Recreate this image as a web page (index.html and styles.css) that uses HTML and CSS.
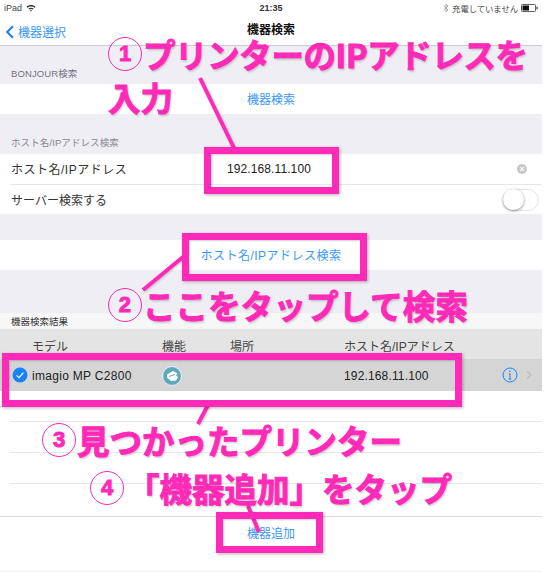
FILE: index.html
```html
<!DOCTYPE html>
<html lang="ja">
<head>
  <meta charset="UTF-8">
  <title>機器検索</title>
  <link rel="stylesheet" href="styles.css">
</head>
<body>
  <div class="screen">
    <div class="status">
      <div class="status-left">
        <span>iPad</span>
        <svg class="wifi" width="10" height="8" viewBox="0 0 10 8"><path d="M0.5 2.8C3 0.4 7 0.4 9.5 2.8L8.6 3.8C6.5 1.9 3.5 1.9 1.4 3.8ZM2.3 4.7C3.8 3.3 6.2 3.3 7.7 4.7L6.8 5.6C5.7 4.7 4.3 4.7 3.2 5.6ZM4 6.6C4.6 6.1 5.4 6.1 6 6.6L5 7.7Z" fill="#333"/></svg>
      </div>
      <div class="status-time">21:35</div>
      <div class="status-right">
        <svg width="6" height="10" viewBox="0 0 6 10"><path d="M0.5 2.8L5 7L3 9V1L5 3L0.5 7.2" fill="none" stroke="#999" stroke-width="0.8"/></svg>
        <span>充電していません</span>
        <svg width="17" height="8" viewBox="0 0 17 8"><rect x="0.5" y="0.5" width="14" height="7" rx="1" fill="#fff" stroke="#333" stroke-width="0.8"/><rect x="1.5" y="1.5" width="6.5" height="5" fill="#111"/><rect x="15.4" y="2.8" width="1.2" height="2.4" fill="#333"/></svg>
      </div>
    </div>

    <div class="nav">
      <div class="nav-back">
        <svg width="10" height="14" viewBox="0 0 10 14"><path d="M8 1.2L2.2 7L8 12.8" fill="none" stroke="#1a82f7" stroke-width="2"/></svg>
        <span>機器選択</span>
      </div>
      <div class="nav-title">機器検索</div>
    </div>

    <div class="section-label first">BONJOUR検索</div>
    <div class="group">
      <div class="row center link">機器検索</div>
    </div>

    <div class="section-label second">ホスト名/IPアドレス検索</div>
    <div class="group">
      <div class="row field">
        <span class="field-name wide">ホスト名/IPアドレス</span>
        <span class="field-value">192.168.11.100</span>
        <span class="clear">
          <svg width="10" height="10" viewBox="0 0 10 10"><circle cx="5" cy="5" r="5" fill="#c7c7cc"/><path d="M3.2 3.2L6.8 6.8M6.8 3.2L3.2 6.8" stroke="#fff" stroke-width="1.1"/></svg>
        </span>
      </div>
      <div class="row field last">
        <span class="field-name">サーバー検索する</span>
        <span class="toggle"><span class="knob"></span></span>
      </div>
    </div>

    <div class="group button-group">
      <div class="row center link wide">ホスト名/IPアドレス検索</div>
    </div>

    <div class="result-label">機器検索結果</div>
    <div class="table-head">
      <span class="col-model">モデル</span>
      <span class="col-func">機能</span>
      <span class="col-place">場所</span>
      <span class="col-host">ホスト名/IPアドレス</span>
    </div>
    <div class="table-row selected">
      <span class="check">
        <svg width="16" height="16" viewBox="0 0 16 16"><circle cx="8" cy="8" r="7.5" fill="#1a82f7"/><path d="M4.6 8.3L7 10.6L11.4 5.6" fill="none" stroke="#fff" stroke-width="1.1"/></svg>
      </span>
      <span class="col-model">imagio MP C2800</span>
      <span class="col-func">
        <svg class="printer" width="20" height="20" viewBox="0 0 20 20"><circle cx="10" cy="10" r="9.5" fill="#62a9b6" stroke="#eef"/><path d="M5 8.5L11 5L15.5 7.5L14 9.5L16 11L14 14.5L9 15L5 11.5Z" fill="#fff"/><path d="M7 10.5L13 8.5" stroke="#62a9b6" stroke-width="1"/></svg>
      </span>
      <span class="col-place"></span>
      <span class="col-host">192.168.11.100</span>
      <span class="row-end">
        <svg width="16" height="16" viewBox="0 0 16 16"><circle cx="8" cy="8" r="7" fill="none" stroke="#1a82f7"/><path d="M8 6.8V12M6.8 12H9.2M6.9 6.8H8" fill="none" stroke="#1a82f7"/><circle cx="8" cy="4.3" r="0.8" fill="#1a82f7"/></svg>
        <svg class="chevron" width="6" height="10" viewBox="0 0 6 10"><path d="M1 1L5 5L1 9" fill="none" stroke="#bbb" stroke-width="1.2"/></svg>
      </span>
    </div>
    <div class="table-row blank"></div>
    <div class="table-row blank"></div>
    <div class="table-row blank"></div>
    <div class="table-row blank tail"></div>
    <div class="toolbar link">機器追加</div>

    <!-- 注釈 -->
    <svg class="lines" width="545" height="572" viewBox="0 0 545 572">
      <path d="M200 78L234 148M183 257L143 290M208 405L198 424M248 506L259 532" stroke="#ff2ab8" stroke-width="4" fill="none"/>
    </svg>
    <div class="mark mark-1"></div>
    <div class="mark mark-2"></div>
    <div class="mark mark-3"></div>
    <div class="mark mark-4"></div>

    <div class="note note-1"><span class="num">1</span>プリンターのIPアドレスを</div>
    <div class="note note-1b">入力</div>
    <div class="note note-2"><span class="num">2</span>ここをタップして検索</div>
    <div class="note note-3"><span class="num">3</span>見つかったプリンター</div>
    <div class="note note-4"><span class="num">4</span>「機器追加」をタップ</div>
  </div>
</body>
</html>
```

FILE: styles.css
```css
* { box-sizing: border-box; }
body {
  margin: 0;
  background: #fff;
  font-family: "Liberation Sans", "Noto Sans CJK JP", sans-serif;
  font-size: 12px;
  color: #222;
}
.screen {
  position: relative;
  width: 542px;
  height: 572px;
  background: #eeeef4;
}

.status {
  display: grid;
  grid-template-columns: 1fr auto 1fr;
  align-items: center;
  height: 16px;
  padding: 0 4px;
  background: #fff;
  font-size: 8.3px;
  color: #444;
}
.status-left { display: flex; align-items: center; gap: 4px; font-size: 9px; }
.status-time { font-size: 9px; font-weight: bold; color: #333; }
.status-right { display: flex; justify-content: flex-end; align-items: center; gap: 3px; }

.nav {
  display: flex;
  align-items: center;
  justify-content: center;
  position: relative;
  height: 30px;
  padding-bottom: 1px;
  background: #fff;
  border-bottom: 1px solid #ccc;
}
.nav-back {
  position: absolute;
  left: 5px;
  top: 7px;
  display: flex;
  align-items: center;
  gap: 3px;
  color: #3b97f5;
}
.nav-title { font-weight: bold; line-height: 12px; color: #111; }

.section-label {
  display: flex;
  align-items: flex-end;
  padding: 0 0 4px 11px;
  font-size: 9.5px;
  letter-spacing: 0.1px;
  color: #77727f;
}
.section-label.first { height: 38px; }
.section-label.second { height: 40px; padding-bottom: 5px; color: #8b8790; }

.group { background: #fff; }
.button-group { margin-top: 26px; }
.row { height: 30px; }
.center { display: flex; align-items: center; justify-content: center; padding-bottom: 2px; }
.link { color: #3b97f5; }
.wide { letter-spacing: 0.5px; }

.field {
  display: flex;
  align-items: center;
  height: 31px;
  margin-left: 11px;
  padding-bottom: 1px;
  border-bottom: 1px solid #e6e6e6;
}
.field.last { height: 29px; padding-bottom: 0; border-bottom: 0; }
.field-name { width: 216px; color: #333; }
.field-value { flex: 1; letter-spacing: 0.1px; }
.clear { display: flex; margin-right: 15px; }
.field.last .field-name { flex: 1; }

.toggle {
  display: block;
  width: 36px;
  height: 22px;
  margin-right: 3px;
  border: 1px solid #e4e4e4;
  border-radius: 11px;
  background: #fff;
}
.knob {
  display: block;
  width: 21px;
  height: 21px;
  margin: -0.5px 0 0 -1px;
  border-radius: 50%;
  background: #fff;
  box-shadow: 0 1px 3px rgba(0,0,0,0.45);
}

.result-label {
  display: flex;
  align-items: center;
  height: 16px;
  margin-top: 43px;
  padding-left: 11px;
  background: #f7f7f7;
  font-size: 9.5px;
  color: #333;
}
.table-head, .table-row {
  display: grid;
  grid-template-columns: 130px 68px 114px 1fr;
  align-items: center;
  padding-left: 32px;
}
.table-head {
  height: 30px;
  padding-top: 2px;
  background: #e4e4e4;
  color: #444;
}
.table-row { position: relative; background: #fff; }
.selected { height: 32px; padding-top: 1px; background: #d5d5d5; color: #222; }
.selected .col-model { letter-spacing: 0.3px; }
.selected .col-host { letter-spacing: 0.15px; }
.blank { height: 31px; }
.blank::after {
  content: "";
  position: absolute;
  left: 10px;
  right: 0;
  bottom: 0;
  height: 1px;
  background: #e8e8e8;
}
.tail { height: 32px; }
.tail::after { display: none; }
.col-func { display: flex; }

.check { position: absolute; left: 12px; top: 8px; display: flex; }
.row-end {
  position: absolute;
  right: 10px;
  top: 8px;
  display: flex;
  align-items: center;
  gap: 8px;
}

.toolbar {
  display: flex;
  align-items: center;
  justify-content: center;
  height: 55px;
  padding-bottom: 24px;
  background: #fff;
  border-top: 1px solid #d9d9d9;
}

/* 注釈 */
.lines { position: absolute; left: 0; top: 0; filter: drop-shadow(1px 1px 1px rgba(0,0,0,0.2)); }
.mark {
  position: absolute;
  border: 7px solid #ff2ab8;
  box-shadow: 1px 1px 3px rgba(0,0,0,0.3), inset 1px 1px 2px rgba(0,0,0,0.2);
}
.mark-1 { left: 204px; top: 147px; width: 135px; height: 47px; }
.mark-2 { left: 182px; top: 233px; width: 185px; height: 48px; }
.mark-3 { left: 2px; top: 353px; width: 460px; height: 54px; }
.mark-4 { left: 216px; top: 512px; width: 107px; height: 41px; }

.note {
  position: absolute;
  display: flex;
  align-items: center;
  white-space: nowrap;
  font-family: "Noto Sans CJK JP", sans-serif;
  font-size: 32.5px;
  line-height: 32px;
  font-weight: 700;
  color: #ff2ab8;
  -webkit-text-stroke: 1px #ff2ab8;
  text-shadow: 1px 2px 2px rgba(0,0,0,0.2);
}
.num {
  display: flex;
  align-items: center;
  justify-content: center;
  width: 34px;
  height: 34px;
  margin-right: 1px;
  border: 1px solid #ff2ab8;
  border-radius: 50%;
  font-family: "Liberation Sans", sans-serif;
  font-size: 22px;
  text-shadow: none;
}
.note-1 { left: 108px; top: 37px; letter-spacing: -0.4px; }
.note-1b { left: 108px; top: 81px; }
.note-2 { left: 108px; top: 288px; letter-spacing: 0.1px; }
.note-3 { left: 42px; top: 423px; }
.note-4 { left: 90px; top: 471px; }
.note-4 .num { margin-right: 3px; }
```
